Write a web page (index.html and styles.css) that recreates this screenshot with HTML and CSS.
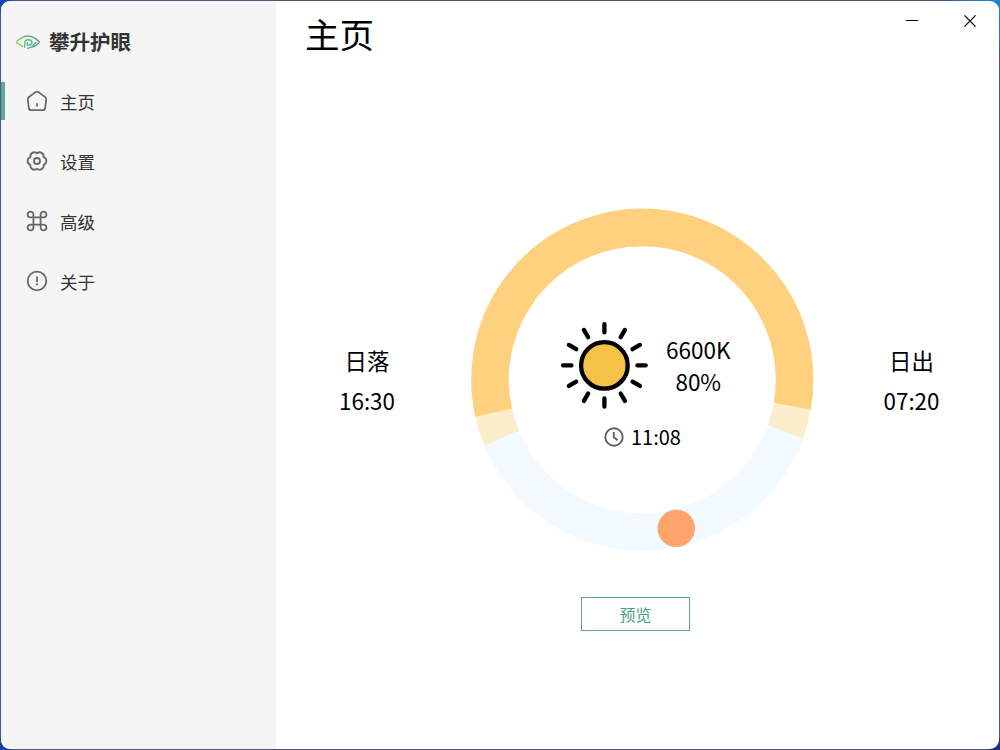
FILE: index.html
```
<!DOCTYPE html>
<html lang="zh-CN">
<head>
    <meta charset="UTF-8">
    <meta name="viewport" content="width=device-width, initial-scale=1.0">
    <title>攀升护眼</title>
    <link rel="stylesheet" href="styles.css">
</head>
<body>
    <div class="window">
        <aside class="sidebar">
            <div class="brand">
                <svg class="brand-logo" viewBox="0 0 26 16" width="26" height="16">
                    <defs>
                        <linearGradient id="logo-color" gradientUnits="userSpaceOnUse" x1="0" y1="0" x2="26" y2="0">
                            <stop offset="0" stop-color="#9bd34f"/>
                            <stop offset="0.5" stop-color="#55b993"/>
                            <stop offset="1" stop-color="#4c8f9c"/>
                        </linearGradient>
                    </defs>
                    <g fill="none" stroke="url(#logo-color)" stroke-width="1.4">
                        <path d="M8 12.7L2 9Q.9 8.1 2 7.2C5.5 4.3 8.8 2 13 2C17.5 2 21.5 5 24.8 8.3"/>
                        <path d="M9.7 13.8V9Q9.7 5.8 13.2 5.8C18.2 5.8 18.2 11.1 13.2 11.1H12.3V8.3"/>
                        <path d="M12 14.2C17 14.2 18.5 11.2 20.8 8.2"/>
                        <path d="M17.5 13.3C20 12.2 22 10.8 23.8 8.8"/>
                    </g>
                </svg>
                <span class="brand-name">攀升护眼</span>
            </div>

            <nav class="menu">
                <a class="menu-item active">
                    <svg class="icon" viewBox="0 0 22 22">
                        <path d="M9.5 2.1Q11 1.1 12.5 2.1L19 6.9Q20.4 7.9 20.2 9.4L19.2 18Q18.9 20.1 16.8 20.1H5.2Q3.1 20.1 2.8 18L1.8 9.4Q1.6 7.9 3 6.9Z"/>
                        <path d="M11 13.2V16.4"/>
                    </svg>
                    <span>主页</span>
                </a>
                <a class="menu-item">
                    <svg class="icon" viewBox="0 0 22 22">
                        <path d="M11 3.4A4 4 0 0 1 17.6 7.2A4 4 0 0 1 17.6 14.8A4 4 0 0 1 11 18.6A4 4 0 0 1 4.4 14.8A4 4 0 0 1 4.4 7.2A4 4 0 0 1 11 3.4Z"/>
                        <circle cx="11" cy="11" r="3"/>
                    </svg>
                    <span>设置</span>
                </a>
                <a class="menu-item">
                    <svg class="icon" viewBox="0 0 22 22">
                        <path d="M7.4 7.4H4.5A2.9 2.9 0 1 1 7.4 4.5V17.5A2.9 2.9 0 1 1 4.5 14.6H17.5A2.9 2.9 0 1 1 14.6 17.5V4.5A2.9 2.9 0 1 1 17.5 7.4Z"/>
                    </svg>
                    <span>高级</span>
                </a>
                <a class="menu-item">
                    <svg class="icon" viewBox="0 0 22 22">
                        <circle cx="11" cy="11" r="9.3"/>
                        <path d="M11 6.6V12.2M11 13.6V15.2"/>
                    </svg>
                    <span>关于</span>
                </a>
            </nav>
        </aside>

        <main class="content">
            <header class="titlebar">
                <h1>主页</h1>
                <div class="window-buttons">
                    <svg viewBox="0 0 12 12" width="12" height="12"><path d="M0 5.5H12"/></svg>
                    <svg viewBox="0 0 12 12" width="12" height="12"><path d="M.4 .4L11.6 11.6M11.6 .4L.4 11.6"/></svg>
                </div>
            </header>

            <section class="day">
                <div class="sun-time">
                    <p>日落</p>
                    <p>16:30</p>
                </div>

                <div class="dial">
                    <!-- midnight is at the bottom, noon at the top -->
                    <svg class="dial-ring" viewBox="-172.3 -171.7 344 344">
                        <circle class="night" r="152.3"/>
                        <circle class="twilight" r="152.3" pathLength="360" stroke-dasharray="222.5 137.5" transform="rotate(157.5)"/>
                        <circle class="daylight" r="152.3" pathLength="360" stroke-dasharray="202.5 157.5" transform="rotate(167.5)"/>
                        <circle class="knob" cx="34" cy="148.7" r="18.7"/>
                    </svg>
                    <div class="dial-info">
                        <div class="status">
                            <svg class="sun" viewBox="-44.4 -44.4 88 88" width="88" height="88">
                                <circle r="23.3"/>
                                <path d="M0 -41.3V-33M0 41.3V33M-41.3 0H-33M41.3 0H33"/>
                                <path transform="rotate(30)" d="M0 -41V-32.5M0 41V32.5M-41 0H-32.5M41 0H32.5"/>
                                <path transform="rotate(60)" d="M0 -41V-32.5M0 41V32.5M-41 0H-32.5M41 0H32.5"/>
                            </svg>
                            <div class="values">
                                <p>6600K</p>
                                <p>80%</p>
                            </div>
                        </div>
                        <div class="clock">
                            <svg viewBox="0 0 20 20" width="20" height="20">
                                <circle cx="10" cy="10" r="8.7"/>
                                <path d="M9.8 5V10.3L13.6 13.3"/>
                            </svg>
                            <span>11:08</span>
                        </div>
                    </div>
                </div>

                <div class="sun-time">
                    <p>日出</p>
                    <p>07:20</p>
                </div>
            </section>

            <button class="preview">预览</button>
        </main>
    </div>
</body>
</html>
```
FILE: styles.css
```
* {
    box-sizing: border-box;
}

body {
    margin: 0;
    height: 750px;
    padding: 1px;
    overflow: hidden;
    font-family: "Noto Sans CJK SC", sans-serif;
    color: #000;
    background:
        radial-gradient(circle at 0 0, #1746b4 8px, transparent 14px),
        radial-gradient(circle at 100% 0, #1289dc 8px, transparent 60px),
        radial-gradient(circle at 0 100%, #1440a8 8px, transparent 14px),
        radial-gradient(circle at 100% 100%, #202e88 8px, transparent 14px),
        #4a5580;
}

h1,
p {
    margin: 0;
    font-weight: 400;
}

.window {
    display: flex;
    height: 748px;
    border-radius: 9px;
    overflow: hidden;
    background: #fff;
}

/* Sidebar */
.sidebar {
    width: 275px;
    padding-top: 21px;
    background: #f5f5f5;
}

.brand {
    display: flex;
    align-items: center;
    gap: 8px;
    height: 40px;
    padding-left: 14px;
}

.brand-name {
    padding-bottom: 2px;
    font-size: 20.5px;
    font-weight: 700;
    line-height: 38px;
    color: #333;
}

.menu {
    display: flex;
    flex-direction: column;
    gap: 22px;
    margin-top: 20px;
}

.menu-item {
    display: flex;
    align-items: center;
    gap: 12px;
    height: 38px;
    padding-left: 21px;
    border-left: 4px solid transparent;
    font-size: 17.5px;
    line-height: 36px;
    color: #333;
}

.menu-item span {
    padding-top: 2px;
}

.menu-item.active {
    border-left-color: #5fa991;
}

.icon {
    width: 22px;
    height: 22px;
    fill: none;
    stroke: #686868;
    stroke-width: 1.8;
    stroke-linejoin: round;
}

/* Content */
.content {
    flex: 1;
    display: flex;
    flex-direction: column;
}

.titlebar {
    display: flex;
    justify-content: space-between;
    height: 70px;
    padding: 7px 23px 0 29px;
}

.titlebar h1 {
    font-size: 34.5px;
    line-height: 50px;
}

.window-buttons {
    display: flex;
    gap: 46px;
    padding-top: 7px;
    fill: none;
    stroke: #000;
    stroke-width: 1.2;
}

.day {
    display: grid;
    grid-template-columns: 182px 344px 197px;
    align-items: center;
    margin-top: 137px;
}

.sun-time {
    font-size: 22.4px;
    line-height: 40px;
    text-align: center;
}

.sun-time:last-child {
    padding-left: 22px;
}

.dial {
    display: grid;
    margin-left: 12px;
    width: 344px;
    height: 344px;
}

.dial-ring,
.dial-info {
    grid-area: 1 / 1;
}

.dial-ring {
    fill: none;
    stroke-width: 37.5;
}

.night {
    stroke: #f2f9ff;
}

.twilight {
    stroke: #fceecb;
}

.daylight {
    stroke: #ffd17f;
}

.knob {
    fill: #ffa46b;
}

.dial-info {
    padding: 113px 0 0 90px;
}

.status {
    display: flex;
    gap: 18px;
}

.sun {
    fill: #f5c246;
    stroke: #000;
    stroke-width: 4.3;
    stroke-linecap: round;
}

.values {
    padding-top: 12px;
    font-size: 22.5px;
    line-height: 32px;
    text-align: center;
}

.clock {
    display: flex;
    align-items: center;
    gap: 7px;
    margin: 13px 0 0 44px;
    font-size: 20px;
    line-height: 30px;
}

.clock svg {
    fill: none;
    stroke: #606060;
    stroke-width: 1.9;
}

.preview {
    width: 109px;
    height: 34px;
    margin: 45px 0 0 305px;
    padding: 0;
    border: 1px solid #55a68c;
    background: #fff;
    color: #4aa385;
    font-family: inherit;
    font-size: 16px;
    line-height: 32px;
}
```
